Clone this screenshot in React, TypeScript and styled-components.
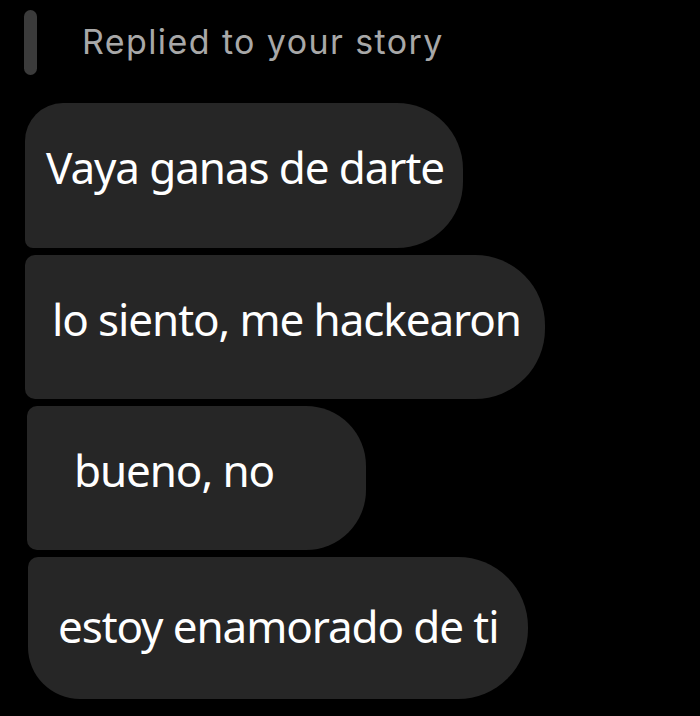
import React from "react";
import styled, { createGlobalStyle } from "styled-components";

const Global = createGlobalStyle`
  html, body { margin: 0; padding: 0; background: #000; }
  body { width: 700px; height: 716px; overflow: hidden; }
`;

const Screen = styled.div`
  width: 700px;
  height: 716px;
  background: #000;
  box-sizing: border-box;
  padding: 10px 0 0 24px;
  display: flex;
  flex-direction: column;
`;

const Header = styled.div`
  display: flex;
  align-items: flex-start;
  height: 65px;
  gap: 45px;
`;

const ReplyBar = styled.div`
  width: 13px;
  height: 65px;
  border-radius: 7px;
  background: #3b3b3b;
`;

const ReplyLabel = styled.div`
  font-family: Inter, "Liberation Sans", sans-serif;
  font-size: 34px;
  line-height: 40px;
  padding-top: 12px;
  letter-spacing: 1.4px;
  color: #a8a8a8;
`;

const Thread = styled.div`
  display: flex;
  flex-direction: column;
  align-items: flex-start;
  gap: 7px;
  margin-top: 28px;
`;

interface BubbleProps {
  $w: number;
  $h: number;
  $pl: number;
  $base: number;
  $ml: number;
  $r: [number, number, number, number];
}

const Bubble = styled.div<BubbleProps>`
  box-sizing: border-box;
  width: ${(p) => p.$w}px;
  height: ${(p) => p.$h}px;
  margin-left: ${(p) => p.$ml}px;
  padding-left: ${(p) => p.$pl}px;
  padding-top: ${(p) => p.$base - 47}px;
  background: #262626;
  border-radius: ${(p) => p.$r.map((v) => `${v}px`).join(" ")};
  font-family: "Noto Sans", "Open Sans", sans-serif;
  font-size: 44px;
  line-height: 60px;
  letter-spacing: -1.1px;
  color: #ffffff;
  white-space: nowrap;
`;

const messages: {
  text: string;
  w: number;
  h: number;
  pl: number;
  base: number;
  ml: number;
  r: [number, number, number, number];
}[] = [
  { text: "Vaya ganas de darte", w: 438, h: 145, pl: 21, base: 81, ml: 1, r: [38, 66, 66, 8] },
  { text: "lo siento, me hackearon", w: 520, h: 144, pl: 27, base: 81, ml: 1, r: [10, 70, 70, 10] },
  { text: "bueno, no", w: 339, h: 144, pl: 47, base: 81, ml: 3, r: [10, 60, 60, 10] },
  { text: "estoy enamorado de ti", w: 500, h: 142, pl: 30, base: 86, ml: 4, r: [10, 70, 70, 52] },
];

export default function App() {
  return (
    <>
      <Global />
      <Screen>
        <Header>
          <ReplyBar />
          <ReplyLabel>Replied to your story</ReplyLabel>
        </Header>
        <Thread>
          {messages.map((m) => (
            <Bubble key={m.text} $w={m.w} $h={m.h} $pl={m.pl} $base={m.base} $ml={m.ml} $r={m.r}>
              {m.text}
            </Bubble>
          ))}
        </Thread>
      </Screen>
    </>
  );
}
